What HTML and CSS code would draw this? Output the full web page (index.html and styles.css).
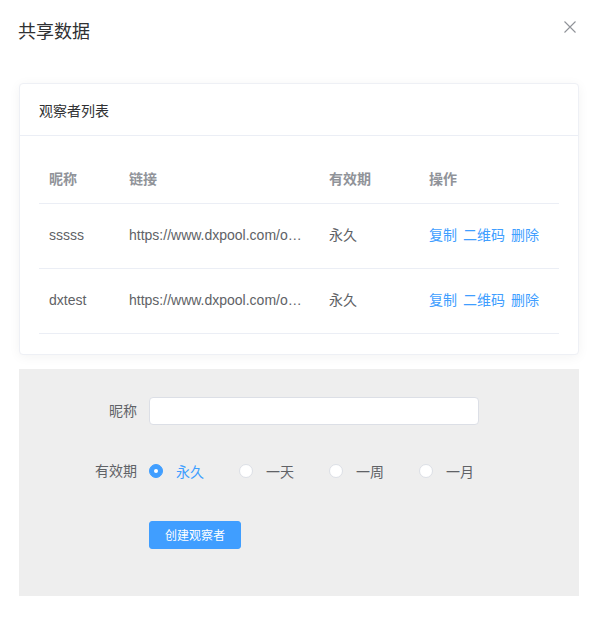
FILE: index.html
```html
<!DOCTYPE html>
<html lang="zh-CN">
<head>
<meta charset="utf-8">
<title>共享数据</title>
<link rel="stylesheet" href="styles.css">
</head>
<body>
<div class="dialog">
  <div class="dialog-header">
    <span class="dialog-title">共享数据</span>
    <button class="close" aria-label="关闭">
      <svg width="12" height="12" viewBox="0 0 12 12"><path d="M0.5 0.5 L11.5 11.5 M11.5 0.5 L0.5 11.5" stroke="#909399" stroke-width="1.1" fill="none"/></svg>
    </button>
  </div>
  <div class="dialog-body">
    <div class="card">
      <div class="card-header">观察者列表</div>
      <div class="card-body">
        <table class="table">
          <colgroup>
            <col class="c1"><col class="c2"><col class="c3"><col class="c4">
          </colgroup>
          <thead>
            <tr><th>昵称</th><th>链接</th><th>有效期</th><th>操作</th></tr>
          </thead>
          <tbody>
            <tr>
              <td>sssss</td>
              <td><div class="ellipsis">https://www.dxpool.com/observer?token=8f2a1c</div></td>
              <td>永久</td>
              <td><div class="ops"><a>复制</a><a>二维码</a><a>删除</a></div></td>
            </tr>
            <tr>
              <td>dxtest</td>
              <td><div class="ellipsis">https://www.dxpool.com/observer?token=3b9e7d</div></td>
              <td>永久</td>
              <td><div class="ops"><a>复制</a><a>二维码</a><a>删除</a></div></td>
            </tr>
          </tbody>
        </table>
      </div>
    </div>
    <div class="form">
      <div class="form-item item-name">
        <label class="form-label">昵称</label>
        <input class="input" type="text">
      </div>
      <div class="form-item item-period">
        <label class="form-label">有效期</label>
        <div class="radio-group">
          <span class="radio checked"><span class="radio-inner"></span><span class="radio-label">永久</span></span>
          <span class="radio"><span class="radio-inner"></span><span class="radio-label">一天</span></span>
          <span class="radio"><span class="radio-inner"></span><span class="radio-label">一周</span></span>
          <span class="radio"><span class="radio-inner"></span><span class="radio-label">一月</span></span>
        </div>
      </div>
      <div class="form-item">
        <span class="form-label"></span>
        <button class="btn">创建观察者</button>
      </div>
    </div>
  </div>
</div>
</body>
</html>
```
FILE: styles.css
```css
* { box-sizing: border-box; }
html, body {
  margin: 0;
  padding: 0;
  background: #fff;
  font-family: "Liberation Sans", "Noto Sans CJK SC", sans-serif;
  font-size: 14px;
  color: #606266;
}
.dialog {
  width: 597px;
}
.dialog-header {
  position: relative;
  padding: 20px 20px 10px 18px;
}
.dialog-title {
  display: block;
  font-size: 18px;
  line-height: 24px;
  color: #303133;
}
.close {
  position: absolute;
  top: 21px;
  right: 21px;
  padding: 0;
  margin: 0;
  border: 0;
  background: none;
  width: 12px;
  height: 12px;
  display: block;
}
.close svg { display: block; }
.dialog-body {
  padding: 29px 18px 27px 19px;
}
.card {
  width: 560px;
  border: 1px solid #EEF0F5;
  border-radius: 4px;
  background: #fff;
  box-shadow: 0 2px 12px 0 rgba(0, 0, 0, 0.05);
}
.card-header {
  height: 52px;
  padding: 0 19px;
  display: flex;
  align-items: center;
  border-bottom: 1px solid #EBEEF5;
  color: #303133;
  font-size: 14px;
}
.card-body {
  padding: 20px 19px;
}
.table {
  width: 520px;
  border-collapse: collapse;
  table-layout: fixed;
}
.c1 { width: 80px; }
.c2 { width: 200px; }
.c3 { width: 100px; }
.c4 { width: 140px; }
.table th, .table td {
  padding: 0 10px;
  text-align: left;
  border-bottom: 1px solid #EBEEF5;
  line-height: 23px;
}
.table th {
  height: 47px;
  color: #909399;
  font-weight: bold;
}
.table td {
  height: 65px;
  color: #606266;
}
.ellipsis {
  white-space: nowrap;
  overflow: hidden;
  text-overflow: ellipsis;
}
.ops {
  display: flex;
  gap: 6px;
  color: #409EFF;
}
.ops a { cursor: pointer; }
.form {
  margin-top: 14px;
  width: 560px;
  background: #EEEEEE;
  padding: 28px 0 47px 0;
}
.form-item {
  display: flex;
  align-items: center;
  height: 28px;
}
.item-name { margin-bottom: 32px; }
.item-period { margin-bottom: 36px; }
.form-label {
  width: 130px;
  padding-right: 12px;
  text-align: right;
  color: #606266;
  font-size: 14px;
  line-height: 28px;
  flex-shrink: 0;
}
.input {
  width: 330px;
  height: 28px;
  border: 1px solid #DCDFE6;
  border-radius: 4px;
  background: #fff;
  margin: 0;
  padding: 0 15px;
  outline: none;
}
.radio-group {
  display: flex;
  align-items: center;
}
.radio {
  display: flex;
  align-items: center;
  width: 90px;
}
.radio-inner {
  width: 14px;
  height: 14px;
  border-radius: 50%;
  border: 1px solid #DCDFE6;
  background: #fff;
  position: relative;
  flex-shrink: 0;
}
.radio.checked .radio-inner {
  background: #409EFF;
  border-color: #409EFF;
}
.radio.checked .radio-inner::after {
  content: "";
  position: absolute;
  width: 4px;
  height: 4px;
  border-radius: 50%;
  background: #fff;
  left: 4px;
  top: 4px;
}
.radio-label {
  margin-left: 13px;
  color: #606266;
}
.radio.checked .radio-label { color: #409EFF; }
.btn {
  width: 92px;
  height: 28px;
  border: 1px solid #409EFF;
  border-radius: 3px;
  background: #409EFF;
  color: #fff;
  font-family: "Liberation Sans", "Noto Sans CJK SC", sans-serif;
  font-size: 12px;
  padding: 0;
  margin: 0;
}
```
